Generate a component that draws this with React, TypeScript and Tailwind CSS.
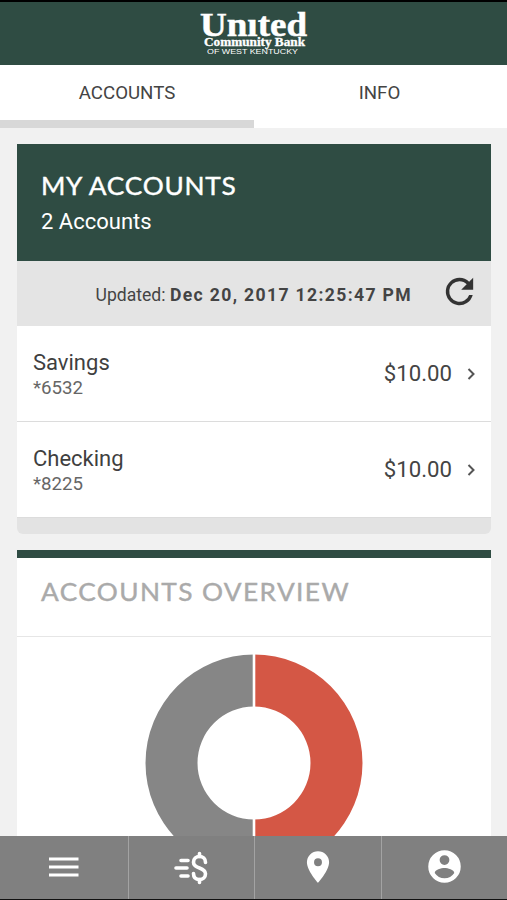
import React from "react";

const accounts = [
  { name: "Savings", number: "*6532", balance: "$10.00" },
  { name: "Checking", number: "*8225", balance: "$10.00" },
];

const Logo = () => (
  <svg width="112" height="58" viewBox="0 -8 112 58" fill="#fff" className="ml-px">
    <text
      x="2"
      y="25.500"
      textLength="107"
      lengthAdjust="spacingAndGlyphs"
      stroke="#fff"
      strokeWidth="0.5"
      className="font-['Liberation_Serif',serif] text-[34px] font-bold"
    >
      Unıted
    </text>
    <text
      x="6"
      y="35.500"
      textLength="101"
      lengthAdjust="spacingAndGlyphs"
      stroke="#fff"
      strokeWidth="0.3"
      className="font-['Liberation_Serif',serif] text-[11.5px] font-bold"
    >
      Community Bank
    </text>
    <text
      x="9"
      y="43.500"
      textLength="91"
      lengthAdjust="spacingAndGlyphs"
      className="font-['Liberation_Sans',sans-serif] text-[7px]"
    >
      OF WEST KENTUCKY
    </text>
  </svg>
);

const Header = () => (
  <header className="flex h-[65px] shrink-0 justify-center border-t-2 border-black bg-[#2f4c43]">
    <Logo />
  </header>
);

const Tabs = () => (
  <div className="flex h-[63px] shrink-0 bg-white text-[18.7px] leading-[57px] text-[#444]">
    <div className="w-[254px] border-b-8 border-[#d8d8d8] text-center">ACCOUNTS</div>
    <div className="flex-1 pr-0.5 text-center">INFO</div>
  </div>
);

const AccountRow = ({ data }: { data: any }) => (
  <div className="flex h-24 items-center border-b border-[#dcdcdc] bg-white pr-[13px] pl-4">
    <div className="flex-1 pt-[3px]">
      <h3 className="text-[22px] leading-[26px] text-[#3f3f3f]">{data.name}</h3>
      <h4 className="text-[18.7px] leading-6 text-[#666]">{data.number}</h4>
    </div>
    <span className="text-[22.2px] text-[#444]">{data.balance}</span>
    <svg width="12" height="14" viewBox="0 0 12 14" className="ml-[14px]">
      <path d="M2.500 2 7.500 7 2.500 12" fill="none" stroke="#555" strokeWidth="2" />
    </svg>
  </div>
);

const AccountsCard = () => (
  <section className="overflow-hidden rounded-b-md bg-[#e3e3e3] pb-4">
    <div className="h-[117px] bg-[#2f4c43] pt-[26px] pl-6 text-white">
      <h2 className="w-max origin-left scale-x-[1.08] font-['Lato',sans-serif] text-[24.3px] leading-8 tracking-[0.7px] whitespace-nowrap [-webkit-text-stroke:0.4px_#fff]">
        MY ACCOUNTS
      </h2>
      <p className="pt-[5px] text-[22px] leading-[30px]">2 Accounts</p>
    </div>
    <div className="flex h-[65px] items-center justify-end bg-[#e4e4e4] pr-[11px] text-[#444]">
      <span className="pt-[3px] text-[17.6px]">
        Updated: <b className="tracking-[1.35px]">Dec 20, 2017 12:25:47 PM</b>
      </span>
      <svg width="41" height="41" viewBox="0 0 24 24" fill="#333" className="mb-1 ml-[27px]">
        <path d="M17.65 6.35A7.96 7.96 0 0 0 12 4a8 8 0 1 0 7.73 10h-2.08A6 6 0 1 1 12 6c1.66 0 3.14.69 4.22 1.78L13 11h7V4z" />
      </svg>
    </div>
    {accounts.map((account) => (
      <AccountRow key={account.number} data={account} />
    ))}
  </section>
);

const OverviewCard = () => (
  <section className="mt-4 border-t-8 border-[#2f4c43] bg-white">
    <div className="h-[79px] border-b border-[#e6e6e6] pt-[18px] pl-6">
      <h2 className="w-max origin-left scale-x-[1.08] font-['Lato',sans-serif] text-[24.3px] leading-8 tracking-[1.3px] whitespace-nowrap text-[#aaa] [-webkit-text-stroke:0.4px_#aaa]">
        ACCOUNTS OVERVIEW
      </h2>
    </div>
    <div className="flex justify-center pt-[17px] pb-6">
      <svg width="218" height="218" viewBox="-109 -109 218 218">
        <path d="M0-108.5A108.5 108.5 0 0 0 0 108.5V56.5A56.5 56.5 0 0 1 0-56.5Z" fill="#868686" />
        <path d="M0-108.5A108.5 108.5 0 0 1 0 108.5V56.5A56.5 56.5 0 0 0 0-56.5Z" fill="#d45745" />
        <path d="M0-109V109" stroke="#fff" strokeWidth="2.6" />
      </svg>
    </div>
  </section>
);

const BottomNav = () => (
  <nav className="grid h-16 shrink-0 grid-cols-[129px_126px_127px_125px] border-b border-[#111] bg-[#808080] text-white *:flex *:items-center *:justify-center *:border-[#a3a3a3]">
    <a className="border-r pb-0.5">
      <svg width="30" height="20" viewBox="0 0 30 20" fill="none" stroke="#fff" strokeWidth="3">
        <path d="M0 2h29.500M0 10h29.500M0 18h29.500" />
      </svg>
    </a>
    <a className="border-r pr-0.5">
      <svg
        width="36"
        height="34"
        viewBox="0 0 36 34"
        fill="none"
        stroke="#fff"
        strokeWidth="3.6"
        strokeLinecap="round"
      >
        <path d="M8 9.500h7M3 17h11M8 25h7" />
        <path d="M26.500 2.500v3M26.500 28.500v3" />
        <path d="M32.500 11.500C32.500 7.500 30 5.500 26.500 5.500S20.500 7.800 20.500 11.200C20.500 14.800 23.500 15.900 26.500 17S32.500 19.400 32.500 22.800 30 28.500 26.500 28.500 20.500 26.500 20.500 22.500" />
      </svg>
    </a>
    <a className="border-r pb-0.5">
      <svg width="38" height="38" viewBox="0 0 24 24" fill="#fff">
        <path d="M12 2a7 7 0 0 0-7 7c0 5.250 7 13 7 13s7-7.750 7-13a7 7 0 0 0-7-7zm0 9.500a2.500 2.500 0 1 1 0-5 2.500 2.500 0 0 1 0 5z" />
      </svg>
    </a>
    <a className="pb-0.5">
      <svg width="39" height="39" viewBox="0 0 24 24" fill="#fff">
        <path d="M12 2a10 10 0 1 0 0 20 10 10 0 0 0 0-20zm0 3a3 3 0 1 1 0 6 3 3 0 0 1 0-6zm0 14.200a7.200 7.200 0 0 1-6-3.220c.03-1.990 4-3.080 6-3.080s5.970 1.090 6 3.080a7.200 7.200 0 0 1-6 3.220z" />
      </svg>
    </a>
  </nav>
);

const App = () => {
  return (
    <div className="flex h-[900px] w-[507px] flex-col overflow-hidden bg-[#f1f1f1] font-['Roboto',sans-serif]">
      <Header />
      <Tabs />
      <main className="min-h-0 flex-1 overflow-hidden pt-4 pr-4 pl-[17px]">
        <AccountsCard />
        <OverviewCard />
      </main>
      <BottomNav />
    </div>
  );
};

export default App;
